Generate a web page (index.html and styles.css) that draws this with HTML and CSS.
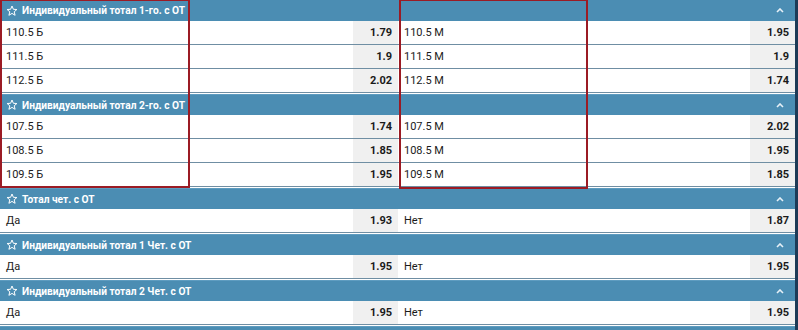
FILE: index.html
```html
<!DOCTYPE html>
<html lang="ru">
<head>
<meta charset="utf-8">
<link rel="stylesheet" href="styles.css">
</head>
<body>
<div class="page">
  <div class="markets">
    <section class="market">
      <div class="head"><svg class="star" viewBox="0 0 12 12"><path d="M6 1 L7.4 4.3 L10.9 4.5 L8.2 6.8 L9.1 10.3 L6 8.4 L2.9 10.3 L3.8 6.8 L1.1 4.5 L4.6 4.3 Z"/></svg><span class="title">Индивидуальный тотал 1-го. с ОТ</span><svg class="chev" viewBox="0 0 8 5"><path d="M1 4 L4 1 L7 4"/></svg></div>
      <div class="row"><span class="lbl">110.5 Б</span><span class="odd">1.79</span><span class="lbl r">110.5 М</span><span class="odd">1.95</span></div>
      <div class="row"><span class="lbl">111.5 Б</span><span class="odd">1.9</span><span class="lbl r">111.5 М</span><span class="odd">1.9</span></div>
      <div class="row"><span class="lbl">112.5 Б</span><span class="odd">2.02</span><span class="lbl r">112.5 М</span><span class="odd">1.74</span></div>
    </section>
    <section class="market">
      <div class="head"><svg class="star" viewBox="0 0 12 12"><path d="M6 1 L7.4 4.3 L10.9 4.5 L8.2 6.8 L9.1 10.3 L6 8.4 L2.9 10.3 L3.8 6.8 L1.1 4.5 L4.6 4.3 Z"/></svg><span class="title">Индивидуальный тотал 2-го. с ОТ</span><svg class="chev" viewBox="0 0 8 5"><path d="M1 4 L4 1 L7 4"/></svg></div>
      <div class="row"><span class="lbl">107.5 Б</span><span class="odd">1.74</span><span class="lbl r">107.5 М</span><span class="odd">2.02</span></div>
      <div class="row"><span class="lbl">108.5 Б</span><span class="odd">1.85</span><span class="lbl r">108.5 М</span><span class="odd">1.95</span></div>
      <div class="row"><span class="lbl">109.5 Б</span><span class="odd">1.95</span><span class="lbl r">109.5 М</span><span class="odd">1.85</span></div>
    </section>
    <section class="market">
      <div class="head"><svg class="star" viewBox="0 0 12 12"><path d="M6 1 L7.4 4.3 L10.9 4.5 L8.2 6.8 L9.1 10.3 L6 8.4 L2.9 10.3 L3.8 6.8 L1.1 4.5 L4.6 4.3 Z"/></svg><span class="title">Тотал чет. с ОТ</span><svg class="chev" viewBox="0 0 8 5"><path d="M1 4 L4 1 L7 4"/></svg></div>
      <div class="row"><span class="lbl">Да</span><span class="odd">1.93</span><span class="lbl r">Нет</span><span class="odd">1.87</span></div>
    </section>
    <section class="market">
      <div class="head"><svg class="star" viewBox="0 0 12 12"><path d="M6 1 L7.4 4.3 L10.9 4.5 L8.2 6.8 L9.1 10.3 L6 8.4 L2.9 10.3 L3.8 6.8 L1.1 4.5 L4.6 4.3 Z"/></svg><span class="title">Индивидуальный тотал 1 Чет. с ОТ</span><svg class="chev" viewBox="0 0 8 5"><path d="M1 4 L4 1 L7 4"/></svg></div>
      <div class="row"><span class="lbl">Да</span><span class="odd">1.95</span><span class="lbl r">Нет</span><span class="odd">1.95</span></div>
    </section>
    <section class="market">
      <div class="head"><svg class="star" viewBox="0 0 12 12"><path d="M6 1 L7.4 4.3 L10.9 4.5 L8.2 6.8 L9.1 10.3 L6 8.4 L2.9 10.3 L3.8 6.8 L1.1 4.5 L4.6 4.3 Z"/></svg><span class="title">Индивидуальный тотал 2 Чет. с ОТ</span><svg class="chev" viewBox="0 0 8 5"><path d="M1 4 L4 1 L7 4"/></svg></div>
      <div class="row"><span class="lbl">Да</span><span class="odd">1.95</span><span class="lbl r">Нет</span><span class="odd">1.95</span></div>
    </section>
    <section class="market">
      <div class="head"></div>
    </section>
  </div>
  <div class="mark mark-left"></div>
  <div class="mark mark-right"></div>
</div>
</body>
</html>
```
FILE: styles.css
```css
html, body {
  margin: 0;
  padding: 0;
  background: #ffffff;
  overflow: hidden;
}
body {
  font-family: Roboto, "Liberation Sans", Arial, sans-serif;
  font-size: 11px;
  color: #1a1a1a;
}
.page {
  position: relative;
  width: 798px;
  height: 330px;
  overflow: hidden;
}
.markets {
  width: 795px;
  border-right: 3px solid #1d3a56;
  display: flex;
  flex-direction: column;
}
.market {
  display: flex;
  flex-direction: column;
}
.market + .market {
  border-top: 1px solid #ffffff;
}
.head {
  height: 21px;
  background: #4b8db3;
  color: #ffffff;
  display: flex;
  align-items: center;
  padding: 0 10px 0 6px;
  font-weight: bold;
  font-size: 10.2px;
  border-top: 1px solid #5e9cc0;
  box-sizing: border-box;
}
.market:first-child .head {
  border-top: 0;
  height: 21px;
}
.star {
  width: 12px;
  height: 12px;
  fill: none;
  stroke: #ffffff;
  stroke-width: 1;
  stroke-linejoin: round;
  margin-right: 4px;
  flex: none;
}
.title {
  flex: 1;
}
.chev {
  width: 8px;
  height: 5px;
  fill: none;
  stroke: #e6f0f7;
  stroke-width: 1.6;
  margin-right: 1px;
}
.row {
  display: grid;
  grid-template-columns: 353px 45px 352px 45px;
  height: 24px;
  box-sizing: border-box;
  border-bottom: 1px solid #6f8ea3;
  background: #ffffff;
}
.lbl {
  display: flex;
  align-items: center;
  padding-left: 6px;
}
.odd {
  display: flex;
  align-items: center;
  justify-content: flex-end;
  padding-right: 6px;
  background: #f0f0f0;
  font-weight: bold;
}
.mark {
  position: absolute;
  border: 2px solid #9b1b24;
  box-sizing: border-box;
  pointer-events: none;
}
.mark-left {
  left: 0;
  top: -1px;
  width: 190px;
  height: 189px;
}
.mark-right {
  left: 399px;
  top: -1px;
  width: 189px;
  height: 190px;
}
```
